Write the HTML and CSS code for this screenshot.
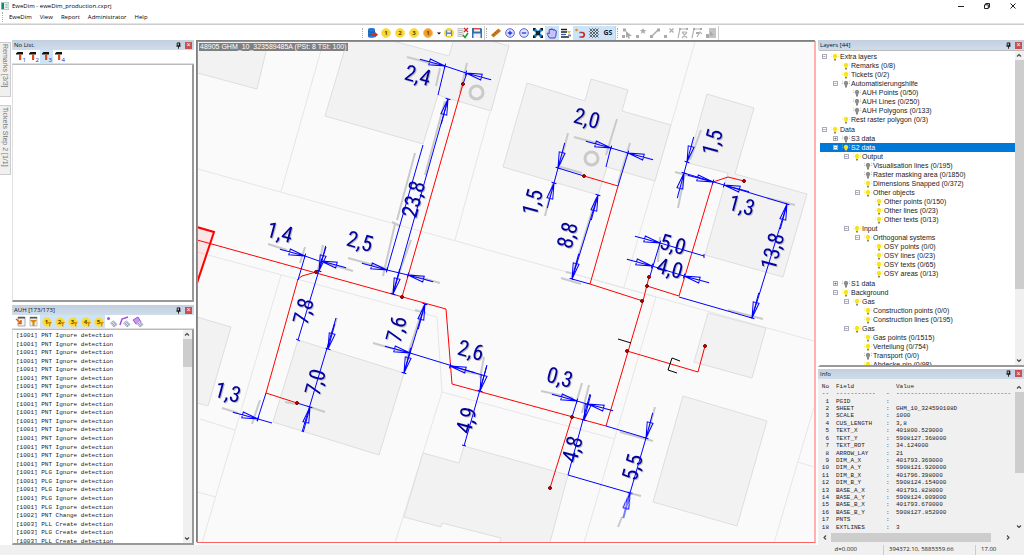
FILE: index.html
```html
<!DOCTYPE html>
<html lang="en">
<head>
<meta charset="utf-8">
<title>EweDim - eweDim_production.cxprj</title>
<link rel="stylesheet" href="styles.css">
</head>
<body>
<svg class="defs" aria-hidden="true">
  <symbol id="bulb" viewBox="0 0 8 8"><path d="M4 .8a2.3 2.3 0 0 1 1.2 4.2v1H2.8V5A2.3 2.3 0 0 1 4 .8Z" fill="currentColor"/><path d="M3 6h2v1.6H3z" fill="#8a8a70"/><path class="rays" d="M.2 1l.9.6M7.8 1l-.9.6M0 3.4h1M8 3.4H7" stroke="currentColor" stroke-width=".6"/></symbol>
  <symbol id="pin" viewBox="0 0 8 8"><path d="M2.5 1h3v3.5h-3zM1.5 4.7h5M4 4.7v3" fill="none" stroke="#111" stroke-width="1"/><path d="M4.4 1h1.1v3.5H4.4z"/></symbol>
  <symbol id="hammer" viewBox="0 0 13 13"><path d="M2 3.5 3.500 2H9v2.500H6L2 4.600z" fill="#111"/><path d="M5 4.500h2.200V10H5z" fill="#d84a18"/></symbol>
  <symbol id="funnel" viewBox="0 0 13 13"><path d="M7 7h5L10.300 9v3L9 11V9z" fill="#d68a10"/></symbol>
  <symbol id="up" viewBox="0 0 8 8"><path d="M2 5l2-2 2 2" fill="none" stroke="#444" stroke-width="1.100"/></symbol>
  <symbol id="clip" viewBox="0 0 13 13"><path d="M5.500 8l3-2.200L12 9.500 9 12z" fill="#dde" stroke="#99b" stroke-width=".8"/><path d="M7 8l3 3M8.500 7l2.500 3" stroke="#77a" stroke-width=".6"/></symbol>
</svg>
<header class="titlebar">
  <svg class="logo" viewBox="0 0 8 8"><path d="M0 .5h8v7H0z" fill="#e8efee" stroke="#8aa"  stroke-width=".6"/><path d="M.5 1H3v6H.5z" fill="#17866f"/><path d="M4.500 2h2v1.500h-2zM4.500 4.500h2V6h-2z" fill="#9bb"/></svg>
  <h1>EweDim - eweDim_production.cxprj</h1>
  <div class="winbtns">
    <button aria-label="Minimize"><svg viewBox="0 0 8 8"><path d="M1 4.500h6"/></svg></button>
    <button aria-label="Restore"><svg viewBox="0 0 8 8"><path d="M1.500 2.800h3.800v3.700H1.500zM2.700 2.800V1.500h3.800v3.800H5.300"/></svg></button>
    <button aria-label="Close"><svg viewBox="0 0 8 8"><path d="M1.500 1.500l5 5M6.500 1.500l-5 5"/></svg></button>
  </div>
</header>
<nav class="menubar"><i class="grip"></i><button>EweDim</button><button>View</button><button>Report</button><button>Administrator</button><button>Help</button></nav>
<div class="toolbar">
  <i class="grip"></i>
  <button class="tool" aria-label="Database"><svg viewBox="0 0 14 14"><path d="M3 3.200c0-1.500 7-1.500 7 0v7.500c0 1.500-7 1.500-7 0z" fill="#2877d0"/><path d="M3 5.500c1 1 6 1 7 0M3 8c1 1 6 1 7 0" fill="none" stroke="#124f9a" stroke-width=".8"/><path d="M7 7.500h3V6l3 2.800-3 2.700V10H7z" fill="#d92b1c"/></svg></button>
  <button class="tool"><span class="coin">1</span></button>
  <button class="tool"><span class="coin">2</span></button>
  <button class="tool"><span class="coin">3</span></button>
  <button class="tool"><span class="coin hot">1</span></button>
  <button class="tool narrow" aria-label="More"><svg viewBox="0 0 7 14"><path d="M2 6.500h4L4 8.500z"/></svg></button>
  <button class="tool" aria-label="Save step"><svg viewBox="0 0 14 14"><circle cx="7" cy="7" r="5" fill="#f8d736"/><path d="M4 4.500h6v5.500H4z" fill="#5a86b8"/><path d="M5.200 4.500h3.500v2H5.200zM5 8h4v2H5z" fill="#eef"/></svg></button>
  <button class="tool" aria-label="Validate"><svg viewBox="0 0 14 14"><path d="M2 2.500h5v8H2z" fill="#eee" stroke="#aaa" stroke-width=".6"/><path d="M3 4.500h3M3 6.500h3M3 8.500h3" stroke="#999" stroke-width=".7"/><path d="M8 2l4 4M12 2L8 6" stroke="#d4202a" stroke-width="1.300"/><path d="M7 9l2 2.500L12 7" fill="none" stroke="#1a9a2c" stroke-width="1.500"/></svg></button>
  <button class="tool" aria-label="Save"><svg viewBox="0 0 14 14"><path d="M2 2h9l1 1v9H2z" fill="#356fae"/><path d="M4 2h6v3.500H4z" fill="#e04a3a"/><path d="M4 3.500h6v2H4zM3.500 7.500h7V12h-7z" fill="#eef3f8"/></svg></button>
  <i class="sep"></i><i class="grip"></i>
  <button class="tool" aria-label="Measure"><svg viewBox="0 0 14 14"><path d="M2 9l7.500-6.500L12 5l-7.500 6.500z" fill="#c8781e"/><path d="M4 8l1 1M6 6l1 1M8 4.500l1 1" stroke="#7a420a" stroke-width=".6"/></svg></button>
  <button class="tool" aria-label="Zoom in"><svg viewBox="0 0 14 14"><circle cx="7" cy="7" r="4.300" fill="#dde4ff" stroke="#5560d8"/><path d="M4.800 7h4.400M7 4.800v4.400" stroke="#2a38c8" stroke-width="1.300"/></svg></button>
  <button class="tool" aria-label="Zoom out"><svg viewBox="0 0 14 14"><circle cx="7" cy="7" r="4.300" fill="#dde4ff" stroke="#5560d8"/><path d="M4.800 7h4.400" stroke="#2a38c8" stroke-width="1.300"/></svg></button>
  <button class="tool" aria-label="Fit"><svg viewBox="0 0 14 14"><path d="M3 3l8 8M11 3l-8 8" stroke="#1580c8" stroke-width="3"/><path d="M5 5h4v4H5z" fill="#123"/><path d="M2 2h3L2 5zM12 2v3L9 2zM2 12V9l3 3zM12 12H9l3-3z" fill="#111"/></svg></button>
  <button class="tool on" aria-label="Pan" aria-pressed="true"><svg viewBox="0 0 14 14"><path d="M4.500 12C2.500 9 1.800 7.500 2.500 7s1.200.2 1.700 1V4c0-1 1.300-1 1.300 0 0-1.800 1.500-1.800 1.500 0 0-1.500 1.600-1.500 1.600.3 0-1 1.500-1 1.500.3 1-.5 1.400.2 1.200 1.500-.2 2.500-.3 3.900-1.300 5.900z" fill="#c4c2f8" stroke="#3534b4" stroke-width=".9"/></svg></button>
  <button class="tool" aria-label="Layers"><svg viewBox="0 0 14 14"><path d="M2 3.500h6M2 6h6M2 11h8" stroke="#222" stroke-width="1.500"/><path d="M2 8.500h5" stroke="#2a68c8" stroke-width="1.300"/><path d="M8 5h4L10 8z" fill="#e8c020"/><path d="M9 8.500h3v2H9z" fill="#7a84b8"/></svg></button>
  <button class="tool on" aria-label="Snap" aria-pressed="true"><svg viewBox="0 0 14 14"><circle cx="3.500" cy="4" r="1.300" fill="#f08a10"/><path d="M7.500 6.500H9a2 2 0 0 1 0 4.500H7.500" fill="none" stroke="#d82020" stroke-width="1.700"/><path d="M6.500 6.500h1M6.500 11h1" stroke="#334"  stroke-width="1.700"/></svg></button>
  <button class="tool on" aria-label="Hatch" aria-pressed="true"><svg viewBox="0 0 14 14"><path d="M2.500 11.500l9-9M2.500 8.500l6-6M2.500 5.500l3-3M5.500 11.500l6-6M8.500 11.500l3-3M2.500 2.500l9 9M2.500 5.500l6 6M5.500 2.500l6 6M8.500 2.500l3 3M2.500 8.500l3 3" stroke="#333" stroke-width=".7"/></svg></button>
  <button class="tool on gs" aria-pressed="true">GS</button>
  <i class="sep"></i><i class="grip"></i>
  <button class="tool off" aria-label="Select node"><svg viewBox="0 0 14 14"><path d="M3 2.500h3v3H3zM2 9h3v3H2z"/><path d="M6 5l6 5-3 .2 1 2-1.500.5L7.600 10.500 6 12z"/></svg></button>
  <button class="tool off" aria-label="Add node"><svg viewBox="0 0 14 14"><path d="M2 9h3v3H2zM9 2l1 2h2.500l-2 1.500.8 2.500L9 6.500 7 8l.7-2.500-2-1.500H8z"/></svg></button>
  <button class="tool off" aria-label="Move node"><svg viewBox="0 0 14 14"><path d="M2 9h3v3H2zM9 2.500h3v3H9z"/><path d="M4 10l6-6" stroke="#aaa" stroke-width="1.500"/></svg></button>
  <button class="tool off" aria-label="Delete node"><svg viewBox="0 0 14 14"><path d="M2 9h3v3H2z"/><path d="M7.500 2.500l4 4M11.500 2.500l-4 4" stroke="#aaa" stroke-width="1.200"/></svg></button>
  <button class="tool off" aria-label="Edit line"><svg viewBox="0 0 14 14"><path d="M2 12L4 3h8M6 6l5 6M11 6l-5 6M6 6h4" fill="none" stroke="#b4b4b4" stroke-width="1.200"/><path d="M3 2h2v2H3zM10 2h2v2h-2z"/></svg></button>
  <button class="tool off" aria-label="Split line"><svg viewBox="0 0 14 14"><path d="M2 12L4 3h8M7 11l3-5 2 2" fill="none" stroke="#b4b4b4" stroke-width="1.200"/><path d="M3 2h2v2H3zM10 2h2v2h-2zM6 6h3v2H6z"/></svg></button>
  <button class="tool off" aria-label="Copy"><svg viewBox="0 0 14 14"><path d="M5 2h7v10H5z" fill="#c4c4c4"/><path d="M2 8h3v4H2zM6 5l4 4-4 1z"/></svg></button>
  <i class="sep"></i>
</div>
<main class="workspace">
  <div class="sidetabs"><button>Remarks [3/3]</button><button class="tall">Tickets Step 2 [1/1]</button></div>
  <div class="leftcol">
    <section class="panel remarks">
      <h2><span>No List.</span><button aria-label="Pin"><svg><use href="#pin"/></svg></button><button class="x" aria-label="Close">×</button></h2>
      <div class="tools">
        <button><svg><use href="#hammer"/></svg><sub>1</sub></button><button><svg><use href="#hammer"/></svg><sub>2</sub></button><button class="on"><svg><use href="#hammer"/></svg><sub>3</sub></button><button><svg><use href="#hammer"/></svg><sub>4</sub></button>
      </div>
      <div class="content"></div>
    </section>
    <section class="panel auh">
      <h2><span>AUH [173/173]</span><button aria-label="Pin"><svg><use href="#pin"/></svg></button><button class="x" aria-label="Close">×</button></h2>
      <div class="tools">
        <button aria-label="Report"><svg viewBox="0 0 13 13"><path d="M4 2h7v9H4z" fill="#f4f4f4" stroke="#999" stroke-width=".8"/><path d="M4 2h7v1.500H4z" fill="#555"/><path d="M2 4l5 4M7 5v3.500H4" fill="none" stroke="#e06010" stroke-width="1.500"/></svg></button>
        <button aria-label="Filter"><svg viewBox="0 0 13 13"><path d="M3 2h7v9H3z" fill="#eee" stroke="#aaa" stroke-width=".7"/><path d="M3 2h7v1.500H3z" fill="#555"/><path d="M3 5h7L7.500 7.500V11h-2V7.500z" fill="#d68a10"/></svg></button>
        <button class="on"><span class="coin">1</span><svg class="over"><use href="#funnel"/></svg></button><button class="on"><span class="coin">2</span><svg class="over"><use href="#funnel"/></svg></button><button class="on"><span class="coin">3</span><svg class="over"><use href="#funnel"/></svg></button><button class="on"><span class="coin">4</span><svg class="over"><use href="#funnel"/></svg></button><button class="on"><span class="coin">5</span><svg class="over"><use href="#funnel"/></svg></button>
        <button aria-label="Points"><svg viewBox="0 0 13 13"><circle cx="3.500" cy="3.500" r="1.500" fill="#a050e0"/><use href="#clip"/></svg></button>
        <button aria-label="Lines"><svg viewBox="0 0 13 13"><path d="M2 10L4 4l6-2" fill="none" stroke="#a050e0" stroke-width="1.500"/><use href="#clip"/></svg></button>
        <button aria-label="Polygons"><svg viewBox="0 0 13 13"><path d="M2 5l5-3 3 5-5 2z" fill="#c898ec" stroke="#a050e0"/><use href="#clip"/></svg></button>
      </div>
      <div class="content withbar">
        <ul class="log">
          <li>[1001] PNT Ignore detection</li><li>[1001] PNT Ignore detection</li><li>[1001] PNT Ignore detection</li><li>[1001] PNT Ignore detection</li><li>[1001] PNT Ignore detection</li><li>[1001] PNT Ignore detection</li><li>[1001] PNT Ignore detection</li><li>[1001] PNT Ignore detection</li><li>[1001] PNT Ignore detection</li><li>[1001] PNT Ignore detection</li><li>[1001] PNT Ignore detection</li><li>[1001] PNT Ignore detection</li><li>[1001] PNT Ignore detection</li><li>[1001] PNT Ignore detection</li><li>[1001] PNT Ignore detection</li><li>[1001] PNT Ignore detection</li>
          <li>[1001] PLG Ignore detection</li><li>[1001] PLG Ignore detection</li><li>[1001] PLG Ignore detection</li><li>[1001] PLG Ignore detection</li><li>[1001] PLG Ignore detection</li>
          <li>[1002] PNT Change detection</li><li>[1003] PLL Create detection</li><li>[1003] PLG Create detection</li><li>[1003] PLL Create detection</li>
        </ul>
        <div class="vbar"><svg><use href="#up"/></svg><i class="thumb short"></i><svg class="down"><use href="#up"/></svg></div>
      </div>
    </section>
  </div>
  <section class="map" aria-label="Map">
    <span class="maplabel">48905 GHM_10_323589485A (PSt: 8 TSt: 100)</span>
    <svg viewBox="198 42 616 500" preserveAspectRatio="xMidYMid slice">
      <defs>
        <g id="ar"><path d="M0 0L-16-3V3ZM0 0H-26M0-2.500V2.500"/></g>
      </defs>
      <g class="parcel"><path d="M321 50L281 192M198 169L814 341M490 112L455 240M509 43L491 111M695 42L624 287M197 252L437 317L442 392L395 543M281 275L202 543M200 419L235 430M197 492L216 497M442 392L615 439M656 297L584 543M567 272L656 297M814 407L774 543M798 462L814 467"/></g>
      <g class="bld">
        <path d="M190 71L257 89L270 35H190Z"/>
        <path d="M349 35L325 116L423 144L438 95L491 111L509 46L470 35H455L449 56L370 35Z"/>
        <path d="M527 83L585 101L591 79L628 90L622 111L671 125L655 181L607 167L598 195L503 167Z"/>
        <path d="M707 94L754 108L735 174L807 194L783 277L705 255L728 173L688 163Z"/>
        <path d="M708 313L766 328L752 378L694 362Z"/>
        <path d="M683 396L767 421L737 526L653 502Z"/>
        <path d="M423 453L459 463L464 446L568 475L548 550H498L501 538L442 523L441 527L404 517Z"/>
        <path d="M190 315L231 327L208 406L190 401Z"/>
        <path d="M298 340L404 373L379 455L273 422Z"/>
      </g>
      <g class="smudge">
        <path d="M407 57L437 65M440 68L436 86M467 63L460 93M445 101L425 175M415 153L397 220M395 224L383 276M411 240L392 293M268 244L287 250M305 247L300 263M323 245L318 270M323 262L353 271M348 258L388 269M408 274L440 283M424 305L406 360M415 310L426 313M373 343L408 353M337 318L328 345M484 357L480 378M462 371L483 375M222 408L238 413M260 400L252 424M285 402L296 404M310 407L325 412"/>
        <path d="M574 137L600 144M617 119L606 155M568 133L560 165M557 166L582 173M630 143L618 183M545 216L553 183M596 198L572 277M561 278L581 284M566 272L575 274M701 130L690 160M685 173L678 208M675 172L690 176M767 198L795 205M728 310L763 319M541 391L573 398M582 383L577 400M589 385L582 413M620 432L653 441M655 407L647 437M630 493L641 496M622 517L618 527M660 237L658 262M392 222L400 226"/>
        <circle cx="476.500" cy="92.500" r="6.500"/><circle cx="591.500" cy="158.500" r="6.500"/>
      </g>
      <g class="pipe">
        <path d="M190 225L214 232L190 304Z" fill="#ff0000" fill-opacity=".08" stroke-width="2"/>
        <path d="M190 238L446 309L452 384L606 426L643 301L649 277M463 84L402 297M316 272L302 276L298 279L266 393L297 403M584 176L618 186L590 284L643 301M744 181L728 177L713 182L679 296L647 286M627 351L698 372L705 346M572 417L550 488"/>
      </g>
      <path class="mark" d="M618 339L631 343M680 361L672 358L668 370L677 373"/>
      <g class="num">
        <text transform="translate(418 75) rotate(15)" y="8">2,4</text>
        <text transform="translate(413 199) rotate(-75)" y="8">23,8</text>
        <text transform="translate(280 232) rotate(15)" y="8">1,4</text>
        <text transform="translate(360 241) rotate(15)" y="8">2,5</text>
        <text transform="translate(303 311) rotate(-75)" y="8">7,8</text>
        <text transform="translate(396 329) rotate(-75)" y="8">7,6</text>
        <text transform="translate(471 350) rotate(15)" y="8">2,6</text>
        <text transform="translate(315 382) rotate(-75)" y="8">7,0</text>
        <text transform="translate(228 392) rotate(15)" y="8">1,3</text>
        <text transform="translate(466 420) rotate(-75)" y="8">4,9</text>
        <text transform="translate(587 118) rotate(15)" y="8">2,0</text>
        <text transform="translate(532 202) rotate(-75)" y="8">1,5</text>
        <text transform="translate(712 142) rotate(-75)" y="8">1,5</text>
        <text transform="translate(742 205) rotate(15)" y="8">1,3</text>
        <text transform="translate(567 235) rotate(-75)" y="8">8,8</text>
        <text transform="translate(673 244) rotate(15)" y="8">5,0</text>
        <text transform="translate(670 268) rotate(15)" y="8">4,0</text>
        <text transform="translate(772 251) rotate(-75)" y="8">13,8</text>
        <text transform="translate(560 377) rotate(15)" y="8">0,3</text>
        <text transform="translate(572 449) rotate(-75)" y="8">4,8</text>
        <text transform="translate(632 467) rotate(-75)" y="8">5,5</text>
      </g>
      <g class="dim">
        <path d="M445 66L466 73M445 66L438 95M467 73L463 84M448 99L393 294M423 145L387 270L408 275M305 256L319 261M305 256L298 280M326 247L298 340M296 339l4 2M425 304L404 373M410 353L482 375M487 365L464 446M462 445l4 1M336 318L302 432M258 419L272 423M266 393L257 421M297 403L310 407M611 148L628 153M611 147L606 167M628 153L618 186M558 168L554 183M558 168L584 176M598 195L572 279L590 284M687 162L684 173L787 204L752 318L679 297M660 243L704 256M660 243L650 276M652 266L684 276M577 401L587 404M577 401L572 417M590 394L568 475L630 493L646 438L606 426M704 254v4"/>
        <use href="#ar" transform="translate(445 66) rotate(15)"/><use href="#ar" transform="translate(466 73) rotate(195)"/>
        <use href="#ar" transform="translate(448 99) rotate(-75)"/><use href="#ar" transform="translate(393 294) rotate(105)"/>
        <use href="#ar" transform="translate(387 270) rotate(15)"/><use href="#ar" transform="translate(408 275) rotate(195)"/>
        <use href="#ar" transform="translate(305 256) rotate(15)"/><use href="#ar" transform="translate(321 261) rotate(195)"/>
        <use href="#ar" transform="translate(319 271) rotate(105)"/>
        <use href="#ar" transform="translate(425 304) rotate(-75)"/><use href="#ar" transform="translate(404 373) rotate(105)"/>
        <use href="#ar" transform="translate(410 353) rotate(15)"/><use href="#ar" transform="translate(450 366) rotate(195)"/>
        <use href="#ar" transform="translate(480 391) rotate(105)"/>
        <use href="#ar" transform="translate(328 349) rotate(105)"/><use href="#ar" transform="translate(310 407) rotate(-75)"/>
        <use href="#ar" transform="translate(258 419) rotate(15)"/>
        <use href="#ar" transform="translate(611 148) rotate(15)"/><use href="#ar" transform="translate(628 153) rotate(195)"/>
        <use href="#ar" transform="translate(558 168) rotate(105)"/><use href="#ar" transform="translate(554 183) rotate(-75)"/>
        <use href="#ar" transform="translate(598 195) rotate(-75)"/><use href="#ar" transform="translate(572 279) rotate(105)"/>
        <use href="#ar" transform="translate(687 162) rotate(105)"/><use href="#ar" transform="translate(684 173) rotate(-75)"/>
        <use href="#ar" transform="translate(713 182) rotate(15)"/><use href="#ar" transform="translate(724 185) rotate(195)"/>
        <use href="#ar" transform="translate(787 204) rotate(-75)"/><use href="#ar" transform="translate(752 318) rotate(105)"/>
        <use href="#ar" transform="translate(660 243) rotate(15)"/><use href="#ar" transform="translate(652 266) rotate(15)"/><use href="#ar" transform="translate(684 276) rotate(195)"/>
        <use href="#ar" transform="translate(577 401) rotate(15)"/><use href="#ar" transform="translate(588 404) rotate(195)"/>
        <use href="#ar" transform="translate(584 420) rotate(105)"/>
        <use href="#ar" transform="translate(646 438) rotate(105)"/><use href="#ar" transform="translate(630 493) rotate(-75)"/>
      </g>
      <g class="dots"><circle cx="463" cy="84" r="1.500"/><circle cx="402" cy="297" r="1.500"/><circle cx="316" cy="272" r="1.500"/><circle cx="297" cy="403" r="1.500"/><circle cx="584" cy="176" r="1.500"/><circle cx="744" cy="181" r="1.500"/><circle cx="649" cy="277" r="1.500"/><circle cx="647" cy="286" r="1.500"/><circle cx="642" cy="301" r="1.500"/><circle cx="627" cy="351" r="1.500"/><circle cx="705" cy="346" r="1.500"/><circle cx="572" cy="417" r="1.500"/><circle cx="550" cy="488" r="1.500"/></g>
    </svg>
  </section>
  <div class="rightcol">
    <section class="panel layers">
      <h2><span>Layers [44]</span><button aria-label="Pin"><svg><use href="#pin"/></svg></button><button class="x" aria-label="Close">×</button></h2>
      <div class="content withbar">
        <ul class="tree">
          <li class="l0"><button>−</button><svg><use href="#bulb"/></svg>Extra layers</li>
          <li class="l1"><svg><use href="#bulb"/></svg>Remarks (0/8)</li>
          <li class="l1"><svg><use href="#bulb"/></svg>Tickets (0/2)</li>
          <li class="l1 dim0"><button>−</button><svg><use href="#bulb"/></svg>Automatisierungshilfe</li>
          <li class="l2 dim0"><svg><use href="#bulb"/></svg>AUH Points (0/50)</li>
          <li class="l2 dim0"><svg><use href="#bulb"/></svg>AUH Lines (0/250)</li>
          <li class="l2 dim0"><svg><use href="#bulb"/></svg>AUH Polygons (0/133)</li>
          <li class="l1"><svg><use href="#bulb"/></svg>Rest raster polygon (0/3)</li>
          <li class="l0 gap"><button>−</button><svg><use href="#bulb"/></svg>Data</li>
          <li class="l1 dim0"><button>+</button><svg><use href="#bulb"/></svg>S3 data</li>
          <li class="l1 sel"><button>−</button><svg><use href="#bulb"/></svg>S2 data</li>
          <li class="l2"><button>−</button><svg><use href="#bulb"/></svg>Output</li>
          <li class="l3 dim0"><svg><use href="#bulb"/></svg>Visualisation lines (0/195)</li>
          <li class="l3 dim0"><svg><use href="#bulb"/></svg>Raster masking area (0/1850)</li>
          <li class="l3"><svg><use href="#bulb"/></svg>Dimensions Snapped (0/372)</li>
          <li class="l3"><button>−</button><svg><use href="#bulb"/></svg>Other objects</li>
          <li class="l4"><svg><use href="#bulb"/></svg>Other points (0/150)</li>
          <li class="l4"><svg><use href="#bulb"/></svg>Other lines (0/23)</li>
          <li class="l4"><svg><use href="#bulb"/></svg>Other texts (0/13)</li>
          <li class="l2"><button>−</button><svg><use href="#bulb"/></svg>Input</li>
          <li class="l3"><button>−</button><svg><use href="#bulb"/></svg>Orthogonal systems</li>
          <li class="l4"><svg><use href="#bulb"/></svg>OSY points (0/0)</li>
          <li class="l4"><svg><use href="#bulb"/></svg>OSY lines (0/23)</li>
          <li class="l4"><svg><use href="#bulb"/></svg>OSY texts (0/65)</li>
          <li class="l4"><svg><use href="#bulb"/></svg>OSY areas (0/13)</li>
          <li class="l1 dim0 gap"><button>+</button><svg><use href="#bulb"/></svg>S1 data</li>
          <li class="l1"><button>−</button><svg><use href="#bulb"/></svg>Background</li>
          <li class="l2"><button>−</button><svg><use href="#bulb"/></svg>Gas</li>
          <li class="l3"><svg><use href="#bulb"/></svg>Construction points (0/0)</li>
          <li class="l3"><svg><use href="#bulb"/></svg>Construction lines (0/195)</li>
          <li class="l2"><button>−</button><svg><use href="#bulb"/></svg>Gas</li>
          <li class="l3"><svg><use href="#bulb"/></svg>Gas points (0/1515)</li>
          <li class="l3"><svg><use href="#bulb"/></svg>Verteilung (0/754)</li>
          <li class="l3 dim0"><svg><use href="#bulb"/></svg>Transport (0/0)</li>
          <li class="l3"><svg><use href="#bulb"/></svg>Abdecke pip (0/98)</li>
        </ul>
        <div class="vbar"><svg><use href="#up"/></svg><i class="thumb long"></i><svg class="down"><use href="#up"/></svg></div>
      </div>
    </section>
    <section class="panel info">
      <h2><span>Info</span><button aria-label="Pin"><svg><use href="#pin"/></svg></button><button class="x" aria-label="Close">×</button></h2>
      <div class="content withbar">
        <div class="tablewrap"><table>
          <tr><th>No</th><th>Field</th><th></th><th>Value</th></tr>
          <tr><td>--</td><td>-----------</td><td>-</td><td>--------------------------------</td></tr>
          <tr><td>1</td><td>PGID</td><td>:</td><td></td></tr>
          <tr><td>2</td><td>SHEET</td><td>:</td><td>GHM_10_324590108D</td></tr>
          <tr><td>3</td><td>SCALE</td><td>:</td><td>1000</td></tr>
          <tr><td>4</td><td>CUS_LENGTH</td><td>:</td><td>3,8</td></tr>
          <tr><td>5</td><td>TEXT_X</td><td>:</td><td>401800.529000</td></tr>
          <tr><td>6</td><td>TEXT_Y</td><td>:</td><td>5908127.368000</td></tr>
          <tr><td>7</td><td>TEXT_ROT</td><td>:</td><td>34.124000</td></tr>
          <tr><td>8</td><td>ARROW_LAY</td><td>:</td><td>21</td></tr>
          <tr><td>9</td><td>DIM_A_X</td><td>:</td><td>401793.369000</td></tr>
          <tr><td>10</td><td>DIM_A_Y</td><td>:</td><td>5908121.920000</td></tr>
          <tr><td>11</td><td>DIM_B_X</td><td>:</td><td>401796.398000</td></tr>
          <tr><td>12</td><td>DIM_B_Y</td><td>:</td><td>5908124.154000</td></tr>
          <tr><td>13</td><td>BASE_A_X</td><td>:</td><td>401791.828000</td></tr>
          <tr><td>14</td><td>BASE_A_Y</td><td>:</td><td>5908124.009000</td></tr>
          <tr><td>15</td><td>BASE_B_X</td><td>:</td><td>401793.670000</td></tr>
          <tr><td>16</td><td>BASE_B_Y</td><td>:</td><td>5908127.852000</td></tr>
          <tr><td>17</td><td>PNTS</td><td>:</td><td></td></tr>
          <tr><td>18</td><td>EXTLINES</td><td>:</td><td>3</td></tr>
        </table></div>
        <div class="vbar"><svg><use href="#up"/></svg><i class="thumb mid"></i><svg class="down"><use href="#up"/></svg></div>
      </div>
      <div class="hbar"><svg class="left"><use href="#up"/></svg><i class="thumb"></i><svg class="right"><use href="#up"/></svg></div>
    </section>
  </div>
</main>
<footer class="status"><span>d=0.000</span><span>394372.10, 5885359.66</span><span>17.00</span></footer>
</body>
</html>
```
FILE: styles.css
```css
* { box-sizing: border-box; }
body { margin: 0; height: 100vh; display: flex; flex-direction: column; background: #fff; color: #222; font: 6px/8px "Open Sans", "Noto Sans", sans-serif; overflow: hidden; }
button { border: 0; padding: 0; margin: 0; background: none; font: inherit; color: inherit; }
ul { list-style: none; margin: 0; padding: 0; }
.defs { position: absolute; width: 0; height: 0; }

.titlebar { display: flex; align-items: center; height: 11px; padding: 0 7px 0 1px; flex: none; }
.logo { width: 8px; height: 8px; margin-right: 3px; }
h1 { font: inherit; font-size: 6px; margin: 0; flex: 1; color: #000; }
.winbtns { display: flex; gap: 18px; }
.winbtns button, .winbtns svg { display: block; width: 8px; height: 8px; }
.winbtns path { fill: none; stroke: #222; stroke-width: 1; }
.menubar { display: flex; align-items: center; height: 13px; flex: none; padding: 0 0 0 2px; gap: 8px; border-bottom: 1px solid #e4e4e4; color: #000; }
.menubar .grip { margin-right: -2px; }
.grip { width: 1px; height: 10px; flex: none; border-left: 1px dotted #aaa; }
.toolbar { display: flex; align-items: center; height: 16px; flex: none; padding-left: 362px; border-top: 1px solid #ccc; }
.toolbar .grip { margin-right: 2px; }
.toolbar .sep { width: 1px; height: 14px; background: #ccc; margin-right: 1px; }
.tool { width: 14px; height: 14px; display: grid; place-items: center; flex: none; }
.tool.narrow { width: 7px; }
.tool svg { width: 100%; height: 14px; display: block; }
.on { background: #cce4f8; }
.off { fill: #aaa; }
.gs { font: bold 7px/14px "Open Sans", sans-serif; color: #123; }
.coin { display: block; width: 10px; height: 10px; border-radius: 50%; background: #fbd82c; border: 1px solid #f3e27c; font: bold 6px/8px "Open Sans", sans-serif; text-align: center; color: #554400; }
.coin.hot { background: #f59a22; border-color: #fac070; }

.workspace { flex: 1; min-height: 0; display: grid; grid-template-columns: 12px 182px 1fr 206px; }
.sidetabs { display: flex; flex-direction: column; gap: 8px; padding-top: 2px; align-items: flex-start; }
.sidetabs button { writing-mode: vertical-rl; width: 11px; height: 55px; background: #f0f0f0; border: 1px solid #ccc; border-left: 0; text-align: left; padding: 1px; font: 7px/8px "Liberation Sans", Arial, sans-serif; color: #777; }
.sidetabs .tall { height: 70px; }

.leftcol, .rightcol { display: flex; flex-direction: column; min-height: 0; min-width: 0; gap: 3px; }
.rightcol { gap: 2px; background: #fff; }
.panel { display: flex; flex-direction: column; min-height: 0; }
.panel h2 { display: flex; align-items: center; gap: 3px; height: 10px; flex: none; margin: 0; padding: 0 2px; font: inherit; color: #111; background: linear-gradient(#c2cfdf, #cfdcea); }
h2 span { flex: 1; }
h2 button, h2 svg { display: block; width: 7px; height: 7px; }
h2 .x { background: #c75050; color: #fff; font: 7px/6px "Liberation Sans", Arial, sans-serif; }
.tools { display: flex; align-items: center; height: 14px; flex: none; padding: 0 2px; border-bottom: 1px solid #ddd; }
.tools button { position: relative; width: 13px; height: 13px; display: grid; place-items: center; }
.tools svg { width: 13px; height: 13px; display: block; }
.tools .over { position: absolute; inset: 0; }
.tools sub { position: absolute; right: 1px; bottom: 0; font: 6px/6px "Open Sans", sans-serif; color: #2222dd; }
.content { flex: 1; min-height: 0; overflow: hidden; background: #fff; border: 1px solid #999; border-left-color: #e0e0e0; border-top-color: #bbb; border-right: 2px solid #999; border-bottom: 2px solid #999; }
.remarks { flex: 262; }
.auh { flex: 240; }
.withbar { display: flex; }
.log { flex: 1; min-width: 0; display: flex; flex-direction: column; justify-content: space-between; margin-bottom: -3px; padding: 2px 3px 0; font: 6px/8px "Liberation Mono", monospace; white-space: nowrap; }
.vbar { width: 9px; flex: none; background: #f0f0f0; display: flex; flex-direction: column; }
.vbar svg, .hbar svg { width: 8px; height: 9px; flex: none; }
.down { margin-top: auto; transform: rotate(180deg); }
.thumb { display: block; background: #cdcdcd; }
.short { height: 13%; }
.long { height: 73%; }
.mid { height: 55%; }

.map { position: relative; min-width: 0; min-height: 0; background: #fafafa; border: 1px solid #ff6060; border-right: 2px solid #ffb0b0; box-shadow: -1px -1px 0 #808080; margin: 1px 2px 2px 3px; overflow: hidden; }
.map > svg { display: block; width: 100%; height: 100%; }
.maplabel { position: absolute; left: 1px; top: 1px; padding: 0 1px; background: #808080; color: #fff; font: 7px/8px "Liberation Sans", Arial, sans-serif; }
.parcel { fill: none; stroke: #e6e6e6; stroke-width: 1; }
.bld { fill: #f2f2f2; stroke: #dedede; stroke-width: 1; }
.smudge { fill: none; stroke: #cacaca; stroke-width: 2; }
.smudge circle { stroke-width: 3; }
.pipe { fill: none; stroke: #ff0000; stroke-width: 1; }
.mark { fill: none; stroke: #000; stroke-width: 1; }
.dim { fill: none; stroke: #0000ff; stroke-width: 1; }
.dots { fill: #d00000; stroke: #700000; stroke-width: 1; }
.num { fill: #00009c; font: 22px "Roboto Condensed", "Liberation Sans Narrow", Roboto, sans-serif; text-anchor: middle; filter: drop-shadow(1px 1px 0 #bbbbbb); }

.layers { flex: 326; }
.info { flex: 176; background: #f0f0f0; }
.tree { flex: 1; min-width: 0; font: 7px/9px "Liberation Sans", Arial, sans-serif; white-space: nowrap; padding-top: 1px; }
.tree li { display: flex; align-items: center; height: 9px; }
.tree li.gap { margin-top: 1px; }
.tree svg { width: 8px; height: 8px; flex: none; margin-right: 1px; color: #f7e41c; }
.tree .dim0 svg { color: #8c8c8c; }
.dim0 .rays { display: none; }
.tree button { width: 5px; height: 5px; border: 1px solid #aab; background: #fff; font: 5px/3px "Liberation Sans", Arial, sans-serif; color: #224; margin: 0 4px 0 -9px; flex: none; }
.l0 { padding-left: 11px; }
.l1 { padding-left: 22px; }
.l2 { padding-left: 33px; }
.l3 { padding-left: 44px; }
.l4 { padding-left: 55px; }
.tree .sel { background: #0078d7; color: #fff; }
.rightcol .content { border-right: 0; border-left: 2px solid #fff; }
.rightcol .info .content { background: #f0f0f0; border: 0; padding: 4px 0 2px 3px; }
.tablewrap { flex: 1; min-width: 0; overflow: hidden; }
table { border-collapse: collapse; table-layout: fixed; width: 100%; height: 100%; font: 6px/7px "Liberation Mono", monospace; }
th, td { padding: 0; font-weight: normal; text-align: left; white-space: nowrap; }
th:nth-child(1), td:nth-child(1) { width: 15px; padding-right: 7px; text-align: right; }
th:nth-child(2) { width: 50px; }
th:nth-child(3) { width: 10px; }
.hbar { height: 9px; flex: none; display: flex; padding: 0 12px 0 3px; margin-bottom: 3px; }
.hbar .thumb { width: 84%; margin-left: 2px; }
.hbar .left { transform: rotate(-90deg); }
.hbar .right { transform: rotate(90deg); margin-left: auto; }

.status { height: 10px; flex: none; display: grid; grid-template-columns: 1fr 92px 49px; background: #f0f0f0; line-height: 9px; }
.status span { padding-left: 5px; border-left: 1px solid #ccc; }
.status span:first-child { text-align: right; padding-right: 26px; border: 0; }
```
